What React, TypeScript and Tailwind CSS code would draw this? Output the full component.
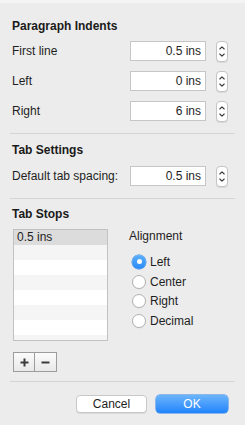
import React from "react";

const font = { fontFamily: '"Liberation Sans", Arial, sans-serif' };

function Stepper() {
  return (
    <div className="flex h-[21px] w-[12px] flex-col items-center justify-center rounded-[4px] border border-[#c4c4c4] bg-white shadow-[0_1px_0_rgba(0,0,0,0.08)]">
      <svg width="8" height="15" viewBox="0 0 8 15" fill="none" stroke="#3a3a3a" strokeWidth="1.1" strokeLinecap="round" strokeLinejoin="round">
        <path d="M1.8 5 L4 2.8 L6.2 5" />
        <path d="M1.8 10 L4 12.2 L6.2 10" />
      </svg>
    </div>
  );
}

function NumberRow({ label, value }: { label: string; value: string }) {
  return (
    <div className="flex h-[20px] items-center pl-[12px]">
      <span className="w-[118px] text-[12px] text-[#1e1e1e]">{label}</span>
      <div className="flex h-[20px] w-[76px] items-center justify-end border border-[#c6c6c6] bg-white pr-[4px] text-[12px] text-[#1e1e1e]">
        {value}
      </div>
      <div className="ml-[10px]">
        <Stepper />
      </div>
    </div>
  );
}

function Heading({ children }: { children: React.ReactNode }) {
  return <div className="pl-[12px] text-[12px] font-bold leading-[15px] text-[#1a1a1a]">{children}</div>;
}

function Divider() {
  return <div className="mx-[10px] h-px bg-[#d5d5d5]" />;
}

function Radio({ label, checked }: { label: string; checked?: boolean }) {
  return (
    <div className="flex h-[19.7px] items-center">
      {checked ? (
        <div className="ml-[3px] flex h-[14px] w-[14px] items-center justify-center rounded-full bg-gradient-to-b from-[#5aaefc] to-[#2a8af7] shadow-[0_0_0_0.5px_#2b7fe0]">
          <div className="h-[5px] w-[5px] rounded-full bg-white" />
        </div>
      ) : (
        <div className="ml-[3px] h-[14px] w-[14px] rounded-full border border-[#b2b2b2] bg-white shadow-[0_0.5px_0_rgba(0,0,0,0.06)]" />
      )}
      <span className="ml-[4px] text-[12px] text-[#1e1e1e]">{label}</span>
    </div>
  );
}

export default function App() {
  const rows = ["0.5 ins", "", "", "", "", "", "", ""];
  return (
    <div className="h-[425px] w-[245px] overflow-hidden bg-[#ececec]" style={font}>
      <div className="h-[3px] bg-[#f4f4f4]" />

      {/* Paragraph Indents */}
      <div className="mt-[16px]">
        <Heading>Paragraph Indents</Heading>
      </div>
      <div className="mt-[7px] flex flex-col gap-[10px]">
        <NumberRow label="First line" value="0.5 ins" />
        <NumberRow label="Left" value="0 ins" />
        <NumberRow label="Right" value="6 ins" />
      </div>
      <div className="mt-[12px]">
        <Divider />
      </div>

      {/* Tab Settings */}
      <div className="mt-[9px]">
        <Heading>Tab Settings</Heading>
      </div>
      <div className="mt-[8px]">
        <NumberRow label="Default tab spacing:" value="0.5 ins" />
      </div>
      <div className="mt-[12px]">
        <Divider />
      </div>

      {/* Tab Stops */}
      <div className="mt-[8px]">
        <Heading>Tab Stops</Heading>
      </div>
      <div className="mt-[7px] flex pl-[13px]">
        <div className="h-[112px] w-[95px] overflow-hidden border border-[#c2c2c2] bg-white">
          {rows.map((r, i) => (
            <div
              key={i}
              className={
                "h-[15px] pl-[3px] text-[12px] leading-[15px] text-[#1e1e1e] " +
                (i === 0 ? "bg-[#dcdcdc]" : i % 2 === 1 ? "bg-[#f5f5f5]" : "bg-white")
              }
            >
              {r}
            </div>
          ))}
        </div>
        <div className="ml-[21px]">
          <div className="text-[12px] leading-[15px] text-[#1e1e1e]">Alignment</div>
          <div className="mt-[8px] flex flex-col">
            <Radio label="Left" checked />
            <Radio label="Center" />
            <Radio label="Right" />
            <Radio label="Decimal" />
          </div>
        </div>
      </div>

      <div className="ml-[13px] mt-[11px] flex h-[20px] w-[44px] border border-[#9c9c9c] bg-gradient-to-b from-[#fbfbfb] to-[#e9e9e9]">
        <div className="flex w-[21px] items-center justify-center border-r border-[#9c9c9c]">
          <svg width="9" height="9" viewBox="0 0 9 9">
            <path d="M4.5 0.5 V8.5 M0.5 4.5 H8.5" stroke="#3c3c3c" strokeWidth="2" />
          </svg>
        </div>
        <div className="flex flex-1 items-center justify-center">
          <svg width="9" height="9" viewBox="0 0 9 9">
            <path d="M0.5 4.5 H8.5" stroke="#3c3c3c" strokeWidth="2" />
          </svg>
        </div>
      </div>

      <div className="mt-[9px]">
        <Divider />
      </div>

      <div className="mt-[13px] flex justify-end gap-[9px] pr-[17px]">
        <button className="flex h-[18px] w-[71px] items-center justify-center rounded-[4px] border border-[#c8c8c8] bg-white text-[12px] text-[#1e1e1e] shadow-[0_1px_0_rgba(0,0,0,0.08)]">
          Cancel
        </button>
        <button className="flex h-[18px] w-[72px] items-center justify-center rounded-[4px] bg-gradient-to-b from-[#6bb4fb] to-[#1c84fb] text-[12px] text-white shadow-[0_0_0_0.5px_#2c7fe8]">
          OK
        </button>
      </div>
    </div>
  );
}
